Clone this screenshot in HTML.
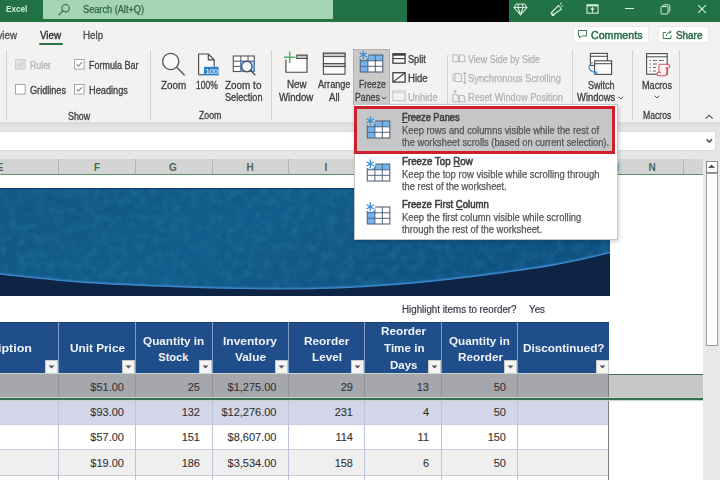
<!DOCTYPE html>
<html><head><meta charset="utf-8"><style>
html,body{margin:0;padding:0;width:720px;height:480px;overflow:hidden;background:#fff;font-family:'Liberation Sans', sans-serif;}
</style></head><body>
<div style="position:relative;width:720px;height:480px;overflow:hidden">
<div style="position:absolute;left:0px;top:0px;width:720px;height:22.5px;background:#217346;"></div>
<div style="position:absolute;left:43px;top:0px;width:290px;height:19px;background:#a5d4b5;"></div>
<svg style="position:absolute;left:0;top:0;pointer-events:none" width="720" height="480" viewBox="0 0 720 480"><circle cx="65.6" cy="8.2" r="3.7" fill="none" stroke="#2e6848" stroke-width="1.1"/><line x1="62.9" y1="10.9" x2="59" y2="14.8" stroke="#2e6848" stroke-width="1.2" stroke-linecap="round"/></svg>
<div style="position:absolute;left:82.50px;top:4.94px;font-size:10px;line-height:10px;font-weight:normal;color:#2c6446;white-space:pre;transform:scaleX(0.9184);transform-origin:0 0;-webkit-text-stroke:0.25px #2c6446">Search (Alt+Q)</div>
<div style="position:absolute;left:5.60px;top:4.27px;font-size:9.6px;line-height:9.6px;font-weight:bold;color:#d4ebdc;white-space:pre;transform:scaleX(0.8533);transform-origin:0 0;">Excel</div>
<div style="position:absolute;left:407px;top:0px;width:102px;height:23px;background:#000;"></div>
<svg style="position:absolute;left:513px;top:3px;overflow:visible;" width="15" height="13" viewBox="0 0 15 13"><path d="M3.5 1 H11.5 L14 4.5 L7.5 11.8 L1 4.5 Z M1 4.5 H14 M5.5 1 L5 4.5 L7.5 11.8 L10 4.5 L9.5 1" fill="none" stroke="#d8ece0" stroke-width="1.1" stroke-linejoin="round"/></svg>
<svg style="position:absolute;left:549px;top:2px;overflow:visible;" width="15" height="14" viewBox="0 0 15 14"><path d="M2 11 L9.5 3.5 L12.5 7 L4.5 12.5 Z M3 12 C2.5 13 3.5 14 5 13 L6 11.5 M11 2.5 L12.5 0.8 M12.5 4.5 L14 3.8" fill="none" stroke="#d8ece0" stroke-width="1.1" stroke-linejoin="round"/></svg>
<svg style="position:absolute;left:586px;top:4px;overflow:visible;" width="13" height="10" viewBox="0 0 13 10"><rect x="1" y="0.8" width="11" height="8.4" fill="none" stroke="#d8ece0" stroke-width="1.1"/><rect x="1" y="0.8" width="11" height="1.6" fill="#d8ece0"/><path d="M6.5 8.5 V4 M4.8 5.6 L6.5 3.8 L8.2 5.6" fill="none" stroke="#d8ece0" stroke-width="1.1"/></svg>
<div style="position:absolute;left:625px;top:7.8px;width:8.5px;height:1.1px;background:#d8ece0;"></div>
<svg style="position:absolute;left:659px;top:3px;overflow:visible;" width="12" height="12" viewBox="0 0 12 12"><rect x="2" y="3.5" width="7" height="7.5" rx="1" fill="none" stroke="#d8ece0" stroke-width="1"/><path d="M4 3.2 V2.6 C4 2 4.5 1.8 5 1.8 H9.5 C10.2 1.8 10.8 2.3 10.8 3 V7.8 C10.8 8.5 10.2 9 9.5 9" fill="none" stroke="#d8ece0" stroke-width="1"/></svg>
<svg style="position:absolute;left:697px;top:4px;overflow:visible;" width="10" height="10" viewBox="0 0 10 10"><path d="M1.2 1.2 L8.8 8.8 M8.8 1.2 L1.2 8.8" stroke="#d8ece0" stroke-width="1.1"/></svg>
<div style="position:absolute;left:0px;top:22px;width:720px;height:100px;background:#f3f2f1;"></div>
<div style="position:absolute;left:-14.90px;top:31.13px;font-size:10px;line-height:10px;font-weight:normal;color:#505050;white-space:pre;transform:scaleX(0.9757);transform-origin:0 0;-webkit-text-stroke:0.3px #505050">Review</div>
<div style="position:absolute;left:40.00px;top:31.13px;font-size:10px;line-height:10px;font-weight:normal;color:#303030;white-space:pre;transform:scaleX(0.9814);transform-origin:0 0;-webkit-text-stroke:0.35px #303030">View</div>
<div style="position:absolute;left:39px;top:42.5px;width:23.5px;height:2.3px;background:#2a7049;border-radius:1.2px"></div>
<div style="position:absolute;left:83.30px;top:31.13px;font-size:10px;line-height:10px;font-weight:normal;color:#505050;white-space:pre;transform:scaleX(0.9865);transform-origin:0 0;-webkit-text-stroke:0.3px #505050">Help</div>
<div style="position:absolute;left:6px;top:50px;width:1px;height:70px;background:#d4d2d0;"></div>
<div style="position:absolute;left:150px;top:50px;width:1px;height:70px;background:#d4d2d0;"></div>
<div style="position:absolute;left:271px;top:50px;width:1px;height:70px;background:#d4d2d0;"></div>
<div style="position:absolute;left:446.5px;top:55px;width:1px;height:50px;background:#d4d2d0;"></div>
<div style="position:absolute;left:571.5px;top:50px;width:1px;height:70px;background:#d4d2d0;"></div>
<div style="position:absolute;left:631.7px;top:50px;width:1px;height:70px;background:#d4d2d0;"></div>
<div style="position:absolute;left:679.3px;top:50px;width:1px;height:70px;background:#d4d2d0;"></div>
<div style="position:absolute;left:573px;top:26px;width:76px;height:17px;background:#ffffff;box-sizing:border-box;border:1px solid #ebe9e7;border-radius:2px"></div>
<svg style="position:absolute;left:0;top:0;pointer-events:none" width="720" height="480" viewBox="0 0 720 480"><path d="M578.5 30.5 H586.5 V36 H581.5 L579.5 38 V36 H578.5 Z" fill="none" stroke="#3a7a55" stroke-width="1" stroke-linejoin="round"/></svg>
<div style="position:absolute;left:590.70px;top:29.91px;font-size:10.5px;line-height:10.5px;font-weight:normal;color:#2a6e48;white-space:pre;transform:scaleX(1.0145);transform-origin:0 0;-webkit-text-stroke:0.5px #2a6e48">Comments</div>
<div style="position:absolute;left:658px;top:26px;width:51px;height:17px;background:#ffffff;box-sizing:border-box;border:1px solid #ebe9e7;border-radius:2px"></div>
<svg style="position:absolute;left:0;top:0;pointer-events:none" width="720" height="480" viewBox="0 0 720 480"><path d="M666 32.5 H663.2 V38.5 H671 V35.5 M666.5 36 C666.5 33.5 668 32 671 32 M669.5 30.3 L671.2 32 L669.5 33.7" fill="none" stroke="#3a7a55" stroke-width="1" stroke-linejoin="round"/></svg>
<div style="position:absolute;left:675.60px;top:29.91px;font-size:10.5px;line-height:10.5px;font-weight:normal;color:#2a6e48;white-space:pre;transform:scaleX(0.9418);transform-origin:0 0;-webkit-text-stroke:0.5px #2a6e48">Share</div>
<svg style="position:absolute;left:15.3px;top:58.9px;overflow:visible;" width="11" height="11" viewBox="0 0 11 11"><rect x="0.5" y="0.5" width="9.6" height="9.6" fill="#e4e2e0" stroke="#cfcdcb" stroke-width="1"/><path d="M2.6 5.4 L4.4 7.1 L8 3.3" fill="none" stroke="#c2c0be" stroke-width="1"/></svg>
<div style="position:absolute;left:30.00px;top:61.23px;font-size:10px;line-height:10px;font-weight:normal;color:#b3b1af;white-space:pre;transform:scaleX(0.8784);transform-origin:0 0;-webkit-text-stroke:0.25px #b3b1af">Ruler</div>
<svg style="position:absolute;left:15.3px;top:84.0px;overflow:visible;" width="11" height="11" viewBox="0 0 11 11"><rect x="0.5" y="0.5" width="9.6" height="9.6" fill="#ffffff" stroke="#a9a7a5" stroke-width="1"/></svg>
<div style="position:absolute;left:30.20px;top:85.83px;font-size:10px;line-height:10px;font-weight:normal;color:#404040;white-space:pre;transform:scaleX(0.9121);transform-origin:0 0;-webkit-text-stroke:0.3px #404040">Gridlines</div>
<svg style="position:absolute;left:74.2px;top:59.0px;overflow:visible;" width="11" height="11" viewBox="0 0 11 11"><rect x="0.5" y="0.5" width="9.6" height="9.6" fill="#ffffff" stroke="#a9a7a5" stroke-width="1"/><path d="M2.6 5.4 L4.4 7.1 L8 3.3" fill="none" stroke="#444" stroke-width="1"/></svg>
<div style="position:absolute;left:88.90px;top:61.03px;font-size:10px;line-height:10px;font-weight:normal;color:#404040;white-space:pre;transform:scaleX(0.8979);transform-origin:0 0;-webkit-text-stroke:0.3px #404040">Formula Bar</div>
<svg style="position:absolute;left:74.2px;top:84.0px;overflow:visible;" width="11" height="11" viewBox="0 0 11 11"><rect x="0.5" y="0.5" width="9.6" height="9.6" fill="#ffffff" stroke="#a9a7a5" stroke-width="1"/><path d="M2.6 5.4 L4.4 7.1 L8 3.3" fill="none" stroke="#444" stroke-width="1"/></svg>
<div style="position:absolute;left:88.90px;top:86.03px;font-size:10px;line-height:10px;font-weight:normal;color:#404040;white-space:pre;transform:scaleX(0.9204);transform-origin:0 0;-webkit-text-stroke:0.3px #404040">Headings</div>
<div style="position:absolute;left:67.80px;top:111.93px;font-size:10px;line-height:10px;font-weight:normal;color:#404040;white-space:pre;transform:scaleX(0.8874);transform-origin:0 0;-webkit-text-stroke:0.3px #404040">Show</div>
<svg style="position:absolute;left:0;top:0;pointer-events:none" width="720" height="480" viewBox="0 0 720 480"><circle cx="170.7" cy="61.4" r="8.1" fill="#fafafa" stroke="#505050" stroke-width="1.25"/><line x1="176.6" y1="67.3" x2="184.6" y2="75.2" stroke="#505050" stroke-width="1.4"/></svg>
<div style="position:absolute;left:160.70px;top:80.53px;font-size:10px;line-height:10px;font-weight:normal;color:#404040;white-space:pre;transform:scaleX(0.9897);transform-origin:0 0;-webkit-text-stroke:0.3px #404040">Zoom</div>
<svg style="position:absolute;left:0;top:0;pointer-events:none" width="720" height="480" viewBox="0 0 720 480"><path d="M198.6 74.8 V54 H208.3 L214.2 59.9 V66.8 M208.3 54 V59.9 H214.2" fill="#fafafa" stroke="#4a4a4a" stroke-width="1.15" stroke-linejoin="round"/><path d="M198.6 74.8 H204" stroke="#4a4a4a" stroke-width="1.15"/><rect x="204" y="66.8" width="14.6" height="8.6" fill="#2c80c8"/><text x="211.4" y="74.1" font-size="8" font-family="Liberation Sans" fill="#fff" text-anchor="middle" letter-spacing="-0.3">100</text></svg>
<div style="position:absolute;left:196.30px;top:80.53px;font-size:10px;line-height:10px;font-weight:normal;color:#404040;white-space:pre;transform:scaleX(0.8484);transform-origin:0 0;-webkit-text-stroke:0.3px #404040">100%</div>
<svg style="position:absolute;left:0;top:0;pointer-events:none" width="720" height="480" viewBox="0 0 720 480"><rect x="233.3" y="56" width="21" height="15.5" fill="#fff"/><rect x="240.8" y="61.2" width="13.5" height="10.3" fill="#b6d4f0"/><path d="M233.3 61.2 H254.3 M233.3 66.4 H240.8 M240.8 56 V71.5 M248 56 V61.2" stroke="#555" stroke-width="1"/><rect x="233.3" y="56" width="21" height="15.5" fill="none" stroke="#555" stroke-width="1.1"/><rect x="240.8" y="61.2" width="13.5" height="10.3" fill="none" stroke="#4a88c8" stroke-width="1"/><circle cx="246.8" cy="66.6" r="5.2" fill="#eef5fc" stroke="#4a4a4a" stroke-width="1.2"/><line x1="250.5" y1="70.3" x2="255.3" y2="75.2" stroke="#4a4a4a" stroke-width="1.3"/></svg>
<div style="position:absolute;left:225.40px;top:80.53px;font-size:10px;line-height:10px;font-weight:normal;color:#404040;white-space:pre;transform:scaleX(0.9922);transform-origin:0 0;-webkit-text-stroke:0.3px #404040">Zoom to</div>
<div style="position:absolute;left:224.90px;top:93.23px;font-size:10px;line-height:10px;font-weight:normal;color:#404040;white-space:pre;transform:scaleX(0.9115);transform-origin:0 0;-webkit-text-stroke:0.3px #404040">Selection</div>
<div style="position:absolute;left:198.60px;top:111.03px;font-size:10px;line-height:10px;font-weight:normal;color:#404040;white-space:pre;transform:scaleX(0.8763);transform-origin:0 0;-webkit-text-stroke:0.3px #404040">Zoom</div>
<svg style="position:absolute;left:0;top:0;pointer-events:none" width="720" height="480" viewBox="0 0 720 480"><path d="M285.9 59.5 V72.2 H307 V55.2 H296.8" fill="#fbfbfb" stroke="#4a4a4a" stroke-width="1.15"/><rect x="296.8" y="55.2" width="10.2" height="3.3" fill="#c8c8c8" stroke="#4a4a4a" stroke-width="1"/><path d="M289.7 51.5 V63 M284 57.2 H295.5" stroke="#54b06a" stroke-width="1.5"/></svg>
<div style="position:absolute;left:287.00px;top:80.33px;font-size:10px;line-height:10px;font-weight:normal;color:#404040;white-space:pre;transform:scaleX(0.9792);transform-origin:0 0;-webkit-text-stroke:0.3px #404040">New</div>
<div style="position:absolute;left:279.40px;top:93.23px;font-size:10px;line-height:10px;font-weight:normal;color:#404040;white-space:pre;transform:scaleX(0.9641);transform-origin:0 0;-webkit-text-stroke:0.3px #404040">Window</div>
<svg style="position:absolute;left:0;top:0;pointer-events:none" width="720" height="480" viewBox="0 0 720 480"><rect x="323.4" y="53.2" width="21.6" height="10.4" fill="#fbfbfb" stroke="#4a4a4a" stroke-width="1.1"/><rect x="323.4" y="53.2" width="21.6" height="3.4" fill="#c8c8c8" stroke="#4a4a4a" stroke-width="1"/><rect x="323.4" y="63.6" width="21.6" height="10.6" fill="#fbfbfb" stroke="#4a4a4a" stroke-width="1.1"/><rect x="323.4" y="63.6" width="21.6" height="3.0" fill="#c8c8c8" stroke="#4a4a4a" stroke-width="1"/></svg>
<div style="position:absolute;left:318.40px;top:80.33px;font-size:10px;line-height:10px;font-weight:normal;color:#404040;white-space:pre;transform:scaleX(0.9107);transform-origin:0 0;-webkit-text-stroke:0.3px #404040">Arrange</div>
<div style="position:absolute;left:329.00px;top:93.23px;font-size:10px;line-height:10px;font-weight:normal;color:#404040;white-space:pre;transform:scaleX(0.9618);transform-origin:0 0;-webkit-text-stroke:0.3px #404040">All</div>
<div style="position:absolute;left:353.2px;top:49px;width:36.6px;height:56px;background:#c9c9c9;box-sizing:border-box;border:1px solid #b2b2b2;border-bottom:none"></div>
<svg style="position:absolute;left:357.5px;top:47.2px;overflow:visible;" width="28" height="28" viewBox="0 0 28 28"><rect x="2.3" y="8" width="22.5" height="17" fill="#fff"/><rect x="2.3" y="8" width="22.5" height="5.8" fill="#74b4ee"/><rect x="2.3" y="8" width="7.6" height="17" fill="#74b4ee"/><path d="M2.3 13.8 H24.8 M2.3 19.3 H24.8 M9.899999999999999 8 V25 M17.3 8 V25" stroke="#52647c" stroke-width="1"/><rect x="2.3" y="8" width="22.5" height="17" fill="none" stroke="#52647c" stroke-width="1.1"/><circle cx="5.3" cy="7.9" r="5.1" fill="#c9c9c9"/><path d="M5.3 3.6000000000000005 V12.2 M1.5590000000000002 5.75 L9.041 10.05 M9.041 5.75 L1.5590000000000002 10.05" stroke="#3a8fd6" stroke-width="1.3"/></svg>
<div style="position:absolute;left:358.50px;top:80.33px;font-size:10px;line-height:10px;font-weight:normal;color:#404040;white-space:pre;transform:scaleX(0.8578);transform-origin:0 0;-webkit-text-stroke:0.3px #404040">Freeze</div>
<div style="position:absolute;left:355.00px;top:93.23px;font-size:10px;line-height:10px;font-weight:normal;color:#404040;white-space:pre;transform:scaleX(0.8745);transform-origin:0 0;-webkit-text-stroke:0.3px #404040">Panes</div>
<svg style="position:absolute;left:381px;top:96px;overflow:visible;" width="6" height="4" viewBox="0 0 6 4"><path d="M0.8 0.8 L3 3 L5.2 0.8" fill="none" stroke="#404040" stroke-width="0.9"/></svg>
<svg style="position:absolute;left:0;top:0;pointer-events:none" width="720" height="480" viewBox="0 0 720 480"><rect x="392.9" y="53.8" width="12.2" height="9.4" fill="#fafafa" stroke="#3a3a3a" stroke-width="1.25"/><rect x="392.9" y="53.8" width="12.2" height="1.9" fill="#3a3a3a"/><line x1="392.9" y1="58.6" x2="405.1" y2="58.6" stroke="#3a3a3a" stroke-width="1.1"/></svg>
<div style="position:absolute;left:408.00px;top:54.73px;font-size:10px;line-height:10px;font-weight:normal;color:#404040;white-space:pre;transform:scaleX(0.9150);transform-origin:0 0;-webkit-text-stroke:0.3px #404040">Split</div>
<svg style="position:absolute;left:0;top:0;pointer-events:none" width="720" height="480" viewBox="0 0 720 480"><rect x="392.9" y="72.7" width="12.2" height="9.4" fill="#fafafa" stroke="#3a3a3a" stroke-width="1.25"/><line x1="392.9" y1="82.1" x2="405.1" y2="72.7" stroke="#3a3a3a" stroke-width="1.1"/></svg>
<div style="position:absolute;left:408.00px;top:73.63px;font-size:10px;line-height:10px;font-weight:normal;color:#404040;white-space:pre;transform:scaleX(0.9573);transform-origin:0 0;-webkit-text-stroke:0.3px #404040">Hide</div>
<svg style="position:absolute;left:0;top:0;pointer-events:none" width="720" height="480" viewBox="0 0 720 480"><rect x="392.9" y="91" width="12.2" height="9.6" fill="none" stroke="#c9c7c5" stroke-width="1.2"/><line x1="392.9" y1="92.8" x2="405.1" y2="92.8" stroke="#d2d0ce" stroke-width="1"/></svg>
<div style="position:absolute;left:408.00px;top:92.73px;font-size:10px;line-height:10px;font-weight:normal;color:#b3b1af;white-space:pre;transform:scaleX(0.9337);transform-origin:0 0;-webkit-text-stroke:0.25px #b3b1af">Unhide</div>
<svg style="position:absolute;left:0;top:0;pointer-events:none" width="720" height="480" viewBox="0 0 720 480"><path d="M452.8 61.8 V54.8 H456.6 L458.2 56.4 V61.8 Z M459.4 61.8 V54.8 H463.2 L464.8 56.4 V61.8 Z" fill="none" stroke="#bdbbb9" stroke-width="1.1"/></svg>
<div style="position:absolute;left:467.50px;top:55.33px;font-size:10px;line-height:10px;font-weight:normal;color:#b3b1af;white-space:pre;transform:scaleX(0.8953);transform-origin:0 0;-webkit-text-stroke:0.25px #b3b1af">View Side by Side</div>
<svg style="position:absolute;left:0;top:0;pointer-events:none" width="720" height="480" viewBox="0 0 720 480"><path d="M453 73.5 V81.5 M455 73.5 H459.5 L461.5 75.5 V81.5 H455 Z M464.8 72.5 V83.5 M463.4 74 L464.8 72.5 L466.2 74 M463.4 82 L464.8 83.5 L466.2 82" fill="none" stroke="#bdbbb9" stroke-width="1.1"/></svg>
<div style="position:absolute;left:467.50px;top:73.58px;font-size:10px;line-height:10px;font-weight:normal;color:#b3b1af;white-space:pre;transform:scaleX(0.9347);transform-origin:0 0;-webkit-text-stroke:0.25px #b3b1af">Synchronous Scrolling</div>
<svg style="position:absolute;left:0;top:0;pointer-events:none" width="720" height="480" viewBox="0 0 720 480"><path d="M452.8 101.8 V94.5 H456.6 L458.2 96.1 V101.8 Z M459.4 101.8 V95.5 H463.2 L464.8 97.1 V101.8 Z M455 93.2 V90.5 M453.6 91.9 L455 90.5 L456.4 91.9" fill="none" stroke="#bdbbb9" stroke-width="1.1"/></svg>
<div style="position:absolute;left:467.50px;top:92.83px;font-size:10px;line-height:10px;font-weight:normal;color:#b3b1af;white-space:pre;transform:scaleX(0.9239);transform-origin:0 0;-webkit-text-stroke:0.25px #b3b1af">Reset Window Position</div>
<svg style="position:absolute;left:0;top:0;pointer-events:none" width="720" height="480" viewBox="0 0 720 480"><rect x="590.4" y="53.4" width="17" height="12" fill="#fbfbfb" stroke="#4a4a4a" stroke-width="1.1"/><line x1="590.4" y1="56.3" x2="607.4" y2="56.3" stroke="#4a4a4a" stroke-width="1"/><rect x="594.6" y="60.8" width="17" height="13.6" fill="#fbfbfb" stroke="#4a4a4a" stroke-width="1.1"/><line x1="594.6" y1="63.7" x2="611.6" y2="63.7" stroke="#4a4a4a" stroke-width="1"/><path d="M592.8 62.5 C587 65.5 588 71.5 596.5 72.8 M594.5 70.6 L596.8 72.8 L594.3 74.8" fill="none" stroke="#4a98d8" stroke-width="1.2"/></svg>
<div style="position:absolute;left:587.80px;top:80.53px;font-size:10px;line-height:10px;font-weight:normal;color:#404040;white-space:pre;transform:scaleX(0.9031);transform-origin:0 0;-webkit-text-stroke:0.3px #404040">Switch</div>
<div style="position:absolute;left:577.30px;top:93.43px;font-size:10px;line-height:10px;font-weight:normal;color:#404040;white-space:pre;transform:scaleX(0.9414);transform-origin:0 0;-webkit-text-stroke:0.3px #404040">Windows</div>
<svg style="position:absolute;left:618px;top:96px;overflow:visible;" width="6" height="4" viewBox="0 0 6 4"><path d="M0.8 0.8 L3 3 L5.2 0.8" fill="none" stroke="#404040" stroke-width="0.9"/></svg>
<svg style="position:absolute;left:0;top:0;pointer-events:none" width="720" height="480" viewBox="0 0 720 480"><rect x="646.6" y="53.6" width="20.6" height="20.6" fill="#fbfbfb" stroke="#4a4a4a" stroke-width="1.1"/><line x1="646.6" y1="56.8" x2="667.2" y2="56.8" stroke="#4a4a4a" stroke-width="1"/><path d="M649.5 60.5 H651 M653 60.5 H657 M659 60.5 H664 M649.5 64 H651 M653 64 H657 M649.5 67.5 H651 M653 67.5 H656 M649.5 71 H651 M653 71 H656" stroke="#6a6a6a" stroke-width="1"/><path d="M660.5 64.3 H667.3 C668.8 64.3 669.6 65.2 669.6 66.3 C669.6 67.4 668.8 68 667.6 68 H666.8 V73.6 C666.8 74.9 665.9 75.7 664.6 75.7 H659 C657.8 75.7 657 74.9 657 73.9 C657 72.8 657.8 72.2 658.9 72.2 V66 C658.9 65 659.6 64.3 660.5 64.3 Z M666.8 68 H665.2 M658.9 72.2 H661" fill="#fdf3f3" stroke="#d8505a" stroke-width="1.05" stroke-linejoin="round"/></svg>
<div style="position:absolute;left:641.80px;top:80.53px;font-size:10px;line-height:10px;font-weight:normal;color:#404040;white-space:pre;transform:scaleX(0.9147);transform-origin:0 0;-webkit-text-stroke:0.3px #404040">Macros</div>
<svg style="position:absolute;left:654px;top:95px;overflow:visible;" width="6" height="4" viewBox="0 0 6 4"><path d="M0.8 0.8 L3 3 L5.2 0.8" fill="none" stroke="#404040" stroke-width="0.9"/></svg>
<div style="position:absolute;left:642.70px;top:111.23px;font-size:10px;line-height:10px;font-weight:normal;color:#404040;white-space:pre;transform:scaleX(0.8629);transform-origin:0 0;-webkit-text-stroke:0.3px #404040">Macros</div>
<svg style="position:absolute;left:0;top:0;pointer-events:none" width="720" height="480" viewBox="0 0 720 480"><path d="M705.8 118.6 L709.2 115.2 L712.6 118.6" fill="none" stroke="#444" stroke-width="1.1"/></svg>
<div style="position:absolute;left:0px;top:122px;width:720px;height:37.5px;background:linear-gradient(#d9d8d7 0px,#e2e1e0 4px,#e6e6e6 9px,#e6e6e6 100%);"></div>
<div style="position:absolute;left:0px;top:131px;width:716px;height:20px;background:#ffffff;box-sizing:border-box;border:1px solid #dcdcdc;border-left:none"></div>
<svg style="position:absolute;left:0;top:0;pointer-events:none" width="720" height="480" viewBox="0 0 720 480"><path d="M706.6 139.2 L709.3 142.1 L712.0 139.2" fill="none" stroke="#505050" stroke-width="1.5"/></svg>
<div style="position:absolute;left:0px;top:159px;width:703px;height:15px;background:#d4d4d4;"></div>
<div style="position:absolute;left:0px;top:173.8px;width:703px;height:1.6px;background:#5a9270;"></div>
<div style="position:absolute;left:58.3px;top:159px;width:1px;height:15px;background:#b4b4b4;"></div>
<div style="position:absolute;left:135px;top:159px;width:1px;height:15px;background:#b4b4b4;"></div>
<div style="position:absolute;left:211.5px;top:159px;width:1px;height:15px;background:#b4b4b4;"></div>
<div style="position:absolute;left:288px;top:159px;width:1px;height:15px;background:#b4b4b4;"></div>
<div style="position:absolute;left:364px;top:159px;width:1px;height:15px;background:#b4b4b4;"></div>
<div style="position:absolute;left:441px;top:159px;width:1px;height:15px;background:#b4b4b4;"></div>
<div style="position:absolute;left:517.2px;top:159px;width:1px;height:15px;background:#b4b4b4;"></div>
<div style="position:absolute;left:609px;top:159px;width:1px;height:15px;background:#b4b4b4;"></div>
<div style="position:absolute;left:683px;top:159px;width:1px;height:15px;background:#b4b4b4;"></div>
<div style="position:absolute;left:-3.34px;top:162.74px;font-size:10px;line-height:10px;font-weight:bold;color:#4a6654;white-space:pre;">E</div>
<div style="position:absolute;left:93.95px;top:162.74px;font-size:10px;line-height:10px;font-weight:bold;color:#4a6654;white-space:pre;">F</div>
<div style="position:absolute;left:169.11px;top:162.74px;font-size:10px;line-height:10px;font-weight:bold;color:#4a6654;white-space:pre;">G</div>
<div style="position:absolute;left:246.38px;top:162.74px;font-size:10px;line-height:10px;font-weight:bold;color:#4a6654;white-space:pre;">H</div>
<div style="position:absolute;left:324.61px;top:162.74px;font-size:10px;line-height:10px;font-weight:bold;color:#4a6654;white-space:pre;">I</div>
<div style="position:absolute;left:400.22px;top:162.74px;font-size:10px;line-height:10px;font-weight:bold;color:#4a6654;white-space:pre;">J</div>
<div style="position:absolute;left:476.38px;top:162.74px;font-size:10px;line-height:10px;font-weight:bold;color:#4a6654;white-space:pre;">K</div>
<div style="position:absolute;left:560.95px;top:162.74px;font-size:10px;line-height:10px;font-weight:bold;color:#4a6654;white-space:pre;">L</div>
<div style="position:absolute;left:610.83px;top:162.74px;font-size:10px;line-height:10px;font-weight:bold;color:#4a6654;white-space:pre;">M</div>
<div style="position:absolute;left:648.38px;top:162.74px;font-size:10px;line-height:10px;font-weight:bold;color:#4a6654;white-space:pre;">N</div>
<div style="position:absolute;left:703px;top:159px;width:17px;height:321px;background:#e9e9e9;"></div>
<div style="position:absolute;left:705.5px;top:161px;width:12px;height:12px;background:#ffffff;box-sizing:border-box;border:1px solid #8a8a8a"></div>
<svg style="position:absolute;left:707px;top:163px;overflow:visible;" width="9" height="7" viewBox="0 0 9 7"><path d="M1 5 L4.5 1.5 L8 5 Z" fill="#555"/></svg>
<div style="position:absolute;left:705.5px;top:173px;width:12px;height:173px;background:#ffffff;box-sizing:border-box;border:1px solid #9a9a9a"></div>
<div style="position:absolute;left:0px;top:175.6px;width:703px;height:304.4px;background:#ffffff;"></div>
<svg style="position:absolute;left:0;top:188px" width="610.3" height="108" viewBox="0 0 610.3 108" preserveAspectRatio="none">
<defs>
<linearGradient id="bg1" x1="0" y1="0" x2="1" y2="0.3"><stop offset="0" stop-color="#115886"/><stop offset="0.45" stop-color="#125d8b"/><stop offset="1" stop-color="#0f5282"/></linearGradient>
<filter id="tex" x="0" y="0" width="100%" height="100%"><feTurbulence type="fractalNoise" baseFrequency="0.11" numOctaves="3" seed="7"/><feColorMatrix type="matrix" values="0 0 0 0 0.04  0 0 0 0 0.26  0 0 0 0 0.42  0 0 0 -1.6 0.95"/></filter>
<filter id="tex2" x="0" y="0" width="100%" height="100%"><feTurbulence type="fractalNoise" baseFrequency="0.12" numOctaves="3" seed="19"/><feColorMatrix type="matrix" values="0 0 0 0 0.15  0 0 0 0 0.45  0 0 0 0 0.68  0 0 0 2.0 -1.05"/></filter>
</defs>
<rect width="610.3" height="108" fill="url(#bg1)"/>
<rect width="610.3" height="108" filter="url(#tex)" opacity="0.35"/>
<rect width="610.3" height="108" filter="url(#tex2)" opacity="0.06"/>
<rect width="610.3" height="1.2" fill="#123f66"/>
<path d="M0 86 C13.3 87.3 53.3 92.0 80 94 C106.7 96.0 133.3 96.9 160 98 C186.7 99.1 213.3 100.0 240 100.4 C266.7 100.8 293.3 101.1 320 100.4 C346.7 99.7 374.0 98.1 400 96 C426.0 93.9 450.5 91.2 476 88 C501.5 84.8 530.8 80.8 553 77 C575.2 73.2 599.7 67.0 610.3 64.6 V108 H0 Z" fill="#0d2444"/>
<path d="M 0.0 85.2 C 13.3 86.5 53.3 91.2 80.0 93.2 C 106.7 95.2 133.3 96.1 160.0 97.2 C 186.7 98.3 213.3 99.2 240.0 99.6 C 266.7 100.0 293.3 100.3 320.0 99.6 C 346.7 98.9 374.0 97.3 400.0 95.2 C 426.0 93.1 450.5 90.4 476.0 87.2 C 501.5 84.0 530.8 80.0 553.0 76.2 C 575.2 72.4 599.7 66.2 609.0 64.2" fill="none" stroke="#2f78ba" stroke-width="2" opacity="0.5"/>
<path d="M0 86 C13.3 87.3 53.3 92.0 80 94 C106.7 96.0 133.3 96.9 160 98 C186.7 99.1 213.3 100.0 240 100.4 C266.7 100.8 293.3 101.1 320 100.4 C346.7 99.7 374.0 98.1 400 96 C426.0 93.9 450.5 91.2 476 88 C501.5 84.8 530.8 80.8 553 77 C575.2 73.2 599.7 67.0 610.3 64.6" fill="none" stroke="#3a86c8" stroke-width="1.3"/>
</svg>
<div style="position:absolute;left:401.50px;top:305.14px;font-size:10px;line-height:10px;font-weight:normal;color:#383848;white-space:pre;transform:scaleX(0.9763);transform-origin:0 0;-webkit-text-stroke:0.2px #383848">Highlight items to reorder?</div>
<div style="position:absolute;left:529.00px;top:305.14px;font-size:10px;line-height:10px;font-weight:normal;color:#383848;white-space:pre;transform:scaleX(0.9799);transform-origin:0 0;-webkit-text-stroke:0.2px #383848">Yes</div>
<div style="position:absolute;left:0px;top:322px;width:609px;height:51.5px;background:#204e8a;"></div>
<div style="position:absolute;left:0px;top:322px;width:609px;height:1px;background:#173d6e;"></div>
<div style="position:absolute;left:58.3px;top:322px;width:1px;height:51.5px;background:#7e9cc6;"></div>
<div style="position:absolute;left:135px;top:322px;width:1px;height:51.5px;background:#7e9cc6;"></div>
<div style="position:absolute;left:211.5px;top:322px;width:1px;height:51.5px;background:#7e9cc6;"></div>
<div style="position:absolute;left:288px;top:322px;width:1px;height:51.5px;background:#7e9cc6;"></div>
<div style="position:absolute;left:364px;top:322px;width:1px;height:51.5px;background:#7e9cc6;"></div>
<div style="position:absolute;left:441px;top:322px;width:1px;height:51.5px;background:#7e9cc6;"></div>
<div style="position:absolute;left:517.2px;top:322px;width:1px;height:51.5px;background:#7e9cc6;"></div>
<div style="position:absolute;left:45.3px;top:360px;width:13px;height:13.5px;background:#f4f4f4;box-sizing:border-box;border:1px solid #c8c8c8"></div>
<svg style="position:absolute;left:48.3px;top:364.8px;overflow:visible;" width="7" height="4" viewBox="0 0 7 4"><path d="M0.5 0.5 H6.5 L3.5 3.5 Z" fill="#555"/></svg>
<div style="position:absolute;left:122px;top:360px;width:13px;height:13.5px;background:#f4f4f4;box-sizing:border-box;border:1px solid #c8c8c8"></div>
<svg style="position:absolute;left:125px;top:364.8px;overflow:visible;" width="7" height="4" viewBox="0 0 7 4"><path d="M0.5 0.5 H6.5 L3.5 3.5 Z" fill="#555"/></svg>
<div style="position:absolute;left:198.5px;top:360px;width:13px;height:13.5px;background:#f4f4f4;box-sizing:border-box;border:1px solid #c8c8c8"></div>
<svg style="position:absolute;left:201.5px;top:364.8px;overflow:visible;" width="7" height="4" viewBox="0 0 7 4"><path d="M0.5 0.5 H6.5 L3.5 3.5 Z" fill="#555"/></svg>
<div style="position:absolute;left:275px;top:360px;width:13px;height:13.5px;background:#f4f4f4;box-sizing:border-box;border:1px solid #c8c8c8"></div>
<svg style="position:absolute;left:278px;top:364.8px;overflow:visible;" width="7" height="4" viewBox="0 0 7 4"><path d="M0.5 0.5 H6.5 L3.5 3.5 Z" fill="#555"/></svg>
<div style="position:absolute;left:351px;top:360px;width:13px;height:13.5px;background:#f4f4f4;box-sizing:border-box;border:1px solid #c8c8c8"></div>
<svg style="position:absolute;left:354px;top:364.8px;overflow:visible;" width="7" height="4" viewBox="0 0 7 4"><path d="M0.5 0.5 H6.5 L3.5 3.5 Z" fill="#555"/></svg>
<div style="position:absolute;left:428px;top:360px;width:13px;height:13.5px;background:#f4f4f4;box-sizing:border-box;border:1px solid #c8c8c8"></div>
<svg style="position:absolute;left:431px;top:364.8px;overflow:visible;" width="7" height="4" viewBox="0 0 7 4"><path d="M0.5 0.5 H6.5 L3.5 3.5 Z" fill="#555"/></svg>
<div style="position:absolute;left:504.20000000000005px;top:360px;width:13px;height:13.5px;background:#f4f4f4;box-sizing:border-box;border:1px solid #c8c8c8"></div>
<svg style="position:absolute;left:507.20000000000005px;top:364.8px;overflow:visible;" width="7" height="4" viewBox="0 0 7 4"><path d="M0.5 0.5 H6.5 L3.5 3.5 Z" fill="#555"/></svg>
<div style="position:absolute;left:596px;top:360px;width:13px;height:13.5px;background:#f4f4f4;box-sizing:border-box;border:1px solid #c8c8c8"></div>
<svg style="position:absolute;left:599px;top:364.8px;overflow:visible;" width="7" height="4" viewBox="0 0 7 4"><path d="M0.5 0.5 H6.5 L3.5 3.5 Z" fill="#555"/></svg>
<div style="position:absolute;left:-2.40px;top:343.29px;font-size:11px;line-height:11px;font-weight:bold;color:#f0f4fa;white-space:pre;transform:scaleX(1.1357);transform-origin:0 0;">iption</div>
<div style="position:absolute;left:70.00px;top:342.99px;font-size:11px;line-height:11px;font-weight:bold;color:#f0f4fa;white-space:pre;transform:scaleX(1.0709);transform-origin:0 0;">Unit Price</div>
<div style="position:absolute;left:142.65px;top:335.99px;font-size:11px;line-height:11px;font-weight:bold;color:#f0f4fa;white-space:pre;transform:scaleX(1.0670);transform-origin:0 0;">Quantity in</div>
<div style="position:absolute;left:158.32px;top:351.99px;font-size:11px;line-height:11px;font-weight:bold;color:#f0f4fa;white-space:pre;">Stock</div>
<div style="position:absolute;left:223.30px;top:335.99px;font-size:11px;line-height:11px;font-weight:bold;color:#f0f4fa;white-space:pre;transform:scaleX(1.0906);transform-origin:0 0;">Inventory</div>
<div style="position:absolute;left:235.00px;top:351.99px;font-size:11px;line-height:11px;font-weight:bold;color:#f0f4fa;white-space:pre;transform:scaleX(1.0783);transform-origin:0 0;">Value</div>
<div style="position:absolute;left:304.05px;top:335.99px;font-size:11px;line-height:11px;font-weight:bold;color:#f0f4fa;white-space:pre;transform:scaleX(1.0738);transform-origin:0 0;">Reorder</div>
<div style="position:absolute;left:311.70px;top:351.99px;font-size:11px;line-height:11px;font-weight:bold;color:#f0f4fa;white-space:pre;transform:scaleX(1.0661);transform-origin:0 0;">Level</div>
<div style="position:absolute;left:381.00px;top:326.29px;font-size:11px;line-height:11px;font-weight:bold;color:#f0f4fa;white-space:pre;transform:scaleX(1.0667);transform-origin:0 0;">Reorder</div>
<div style="position:absolute;left:383.55px;top:343.29px;font-size:11px;line-height:11px;font-weight:bold;color:#f0f4fa;white-space:pre;transform:scaleX(1.0571);transform-origin:0 0;">Time in</div>
<div style="position:absolute;left:390.05px;top:360.29px;font-size:11px;line-height:11px;font-weight:bold;color:#f0f4fa;white-space:pre;transform:scaleX(1.0458);transform-origin:0 0;">Days</div>
<div style="position:absolute;left:449.00px;top:335.79px;font-size:11px;line-height:11px;font-weight:bold;color:#f0f4fa;white-space:pre;transform:scaleX(1.0617);transform-origin:0 0;">Quantity in</div>
<div style="position:absolute;left:457.50px;top:352.29px;font-size:11px;line-height:11px;font-weight:bold;color:#f0f4fa;white-space:pre;transform:scaleX(1.0667);transform-origin:0 0;">Reorder</div>
<div style="position:absolute;left:522.55px;top:343.29px;font-size:11px;line-height:11px;font-weight:bold;color:#f0f4fa;white-space:pre;transform:scaleX(1.0669);transform-origin:0 0;">Discontinued?</div>
<div style="position:absolute;left:0px;top:373.5px;width:609px;height:24.69999999999999px;background:#a6a7ad;"></div>
<div style="position:absolute;left:0px;top:399.8px;width:609px;height:24.69999999999999px;background:#d3d6e8;"></div>
<div style="position:absolute;left:0px;top:424.5px;width:609px;height:25.0px;background:#ffffff;"></div>
<div style="position:absolute;left:0px;top:449.5px;width:609px;height:25.5px;background:#efefef;"></div>
<div style="position:absolute;left:0px;top:475px;width:609px;height:6px;background:#ffffff;"></div>
<div style="position:absolute;left:609px;top:373.5px;width:94px;height:24.7px;background:#c8c8c8;"></div>
<div style="position:absolute;left:0px;top:424.0px;width:609px;height:1px;background:#c9cde0;"></div>
<div style="position:absolute;left:0px;top:449.0px;width:609px;height:1px;background:#c9cde0;"></div>
<div style="position:absolute;left:0px;top:474.5px;width:609px;height:1px;background:#c9cde0;"></div>
<div style="position:absolute;left:58.3px;top:399.5px;width:1px;height:81px;background:#bcc3da;"></div>
<div style="position:absolute;left:58.3px;top:373.5px;width:1px;height:25px;background:#8f9098;"></div>
<div style="position:absolute;left:135px;top:399.5px;width:1px;height:81px;background:#bcc3da;"></div>
<div style="position:absolute;left:135px;top:373.5px;width:1px;height:25px;background:#8f9098;"></div>
<div style="position:absolute;left:211.5px;top:399.5px;width:1px;height:81px;background:#bcc3da;"></div>
<div style="position:absolute;left:211.5px;top:373.5px;width:1px;height:25px;background:#8f9098;"></div>
<div style="position:absolute;left:288px;top:399.5px;width:1px;height:81px;background:#bcc3da;"></div>
<div style="position:absolute;left:288px;top:373.5px;width:1px;height:25px;background:#8f9098;"></div>
<div style="position:absolute;left:364px;top:399.5px;width:1px;height:81px;background:#bcc3da;"></div>
<div style="position:absolute;left:364px;top:373.5px;width:1px;height:25px;background:#8f9098;"></div>
<div style="position:absolute;left:441px;top:399.5px;width:1px;height:81px;background:#bcc3da;"></div>
<div style="position:absolute;left:441px;top:373.5px;width:1px;height:25px;background:#8f9098;"></div>
<div style="position:absolute;left:517.2px;top:399.5px;width:1px;height:81px;background:#bcc3da;"></div>
<div style="position:absolute;left:517.2px;top:373.5px;width:1px;height:25px;background:#8f9098;"></div>
<div style="position:absolute;left:608.2px;top:373.5px;width:1px;height:107px;background:#7a7c88;"></div>
<div style="position:absolute;left:0px;top:373.4px;width:609px;height:1px;background:#c4d6ca;"></div>
<div style="position:absolute;left:0px;top:397.4px;width:703px;height:0.9px;background:#c4d6ca;"></div>
<div style="position:absolute;left:0px;top:398.3px;width:703px;height:1.7px;background:#357050;"></div>
<div style="position:absolute;left:0px;top:400.0px;width:703px;height:0.8px;background:#c4d6ca;"></div>
<div style="position:absolute;left:609px;top:373.5px;width:94px;height:1.6px;background:#357050;"></div>
<div style="position:absolute;left:90.34px;top:382.09px;font-size:11px;line-height:11px;font-weight:normal;color:#333333;white-space:pre;-webkit-text-stroke:0.1px #333">$51.00</div>
<div style="position:absolute;left:187.75px;top:382.09px;font-size:11px;line-height:11px;font-weight:normal;color:#333333;white-space:pre;-webkit-text-stroke:0.1px #333">25</div>
<div style="position:absolute;left:227.56px;top:382.09px;font-size:11px;line-height:11px;font-weight:normal;color:#333333;white-space:pre;-webkit-text-stroke:0.1px #333">$1,275.00</div>
<div style="position:absolute;left:340.75px;top:382.09px;font-size:11px;line-height:11px;font-weight:normal;color:#333333;white-space:pre;-webkit-text-stroke:0.1px #333">29</div>
<div style="position:absolute;left:416.75px;top:382.09px;font-size:11px;line-height:11px;font-weight:normal;color:#333333;white-space:pre;-webkit-text-stroke:0.1px #333">13</div>
<div style="position:absolute;left:493.75px;top:382.09px;font-size:11px;line-height:11px;font-weight:normal;color:#333333;white-space:pre;-webkit-text-stroke:0.1px #333">50</div>
<div style="position:absolute;left:90.34px;top:407.29px;font-size:11px;line-height:11px;font-weight:normal;color:#333333;white-space:pre;-webkit-text-stroke:0.1px #333">$93.00</div>
<div style="position:absolute;left:181.64px;top:407.29px;font-size:11px;line-height:11px;font-weight:normal;color:#333333;white-space:pre;-webkit-text-stroke:0.1px #333">132</div>
<div style="position:absolute;left:221.44px;top:407.29px;font-size:11px;line-height:11px;font-weight:normal;color:#333333;white-space:pre;-webkit-text-stroke:0.1px #333">$12,276.00</div>
<div style="position:absolute;left:334.64px;top:407.29px;font-size:11px;line-height:11px;font-weight:normal;color:#333333;white-space:pre;-webkit-text-stroke:0.1px #333">231</div>
<div style="position:absolute;left:422.88px;top:407.29px;font-size:11px;line-height:11px;font-weight:normal;color:#333333;white-space:pre;-webkit-text-stroke:0.1px #333">4</div>
<div style="position:absolute;left:493.75px;top:407.29px;font-size:11px;line-height:11px;font-weight:normal;color:#333333;white-space:pre;-webkit-text-stroke:0.1px #333">50</div>
<div style="position:absolute;left:90.34px;top:432.49px;font-size:11px;line-height:11px;font-weight:normal;color:#333333;white-space:pre;-webkit-text-stroke:0.1px #333">$57.00</div>
<div style="position:absolute;left:181.64px;top:432.49px;font-size:11px;line-height:11px;font-weight:normal;color:#333333;white-space:pre;-webkit-text-stroke:0.1px #333">151</div>
<div style="position:absolute;left:227.56px;top:432.49px;font-size:11px;line-height:11px;font-weight:normal;color:#333333;white-space:pre;-webkit-text-stroke:0.1px #333">$8,607.00</div>
<div style="position:absolute;left:335.45px;top:432.49px;font-size:11px;line-height:11px;font-weight:normal;color:#333333;white-space:pre;-webkit-text-stroke:0.1px #333">114</div>
<div style="position:absolute;left:417.58px;top:432.49px;font-size:11px;line-height:11px;font-weight:normal;color:#333333;white-space:pre;-webkit-text-stroke:0.1px #333">11</div>
<div style="position:absolute;left:487.64px;top:432.49px;font-size:11px;line-height:11px;font-weight:normal;color:#333333;white-space:pre;-webkit-text-stroke:0.1px #333">150</div>
<div style="position:absolute;left:90.34px;top:457.69px;font-size:11px;line-height:11px;font-weight:normal;color:#333333;white-space:pre;-webkit-text-stroke:0.1px #333">$19.00</div>
<div style="position:absolute;left:181.64px;top:457.69px;font-size:11px;line-height:11px;font-weight:normal;color:#333333;white-space:pre;-webkit-text-stroke:0.1px #333">186</div>
<div style="position:absolute;left:227.56px;top:457.69px;font-size:11px;line-height:11px;font-weight:normal;color:#333333;white-space:pre;-webkit-text-stroke:0.1px #333">$3,534.00</div>
<div style="position:absolute;left:334.64px;top:457.69px;font-size:11px;line-height:11px;font-weight:normal;color:#333333;white-space:pre;-webkit-text-stroke:0.1px #333">158</div>
<div style="position:absolute;left:422.88px;top:457.69px;font-size:11px;line-height:11px;font-weight:normal;color:#333333;white-space:pre;-webkit-text-stroke:0.1px #333">6</div>
<div style="position:absolute;left:493.75px;top:457.69px;font-size:11px;line-height:11px;font-weight:normal;color:#333333;white-space:pre;-webkit-text-stroke:0.1px #333">50</div>
<div style="position:absolute;left:353.5px;top:104px;width:264.3px;height:135.8px;background:#ffffff;box-sizing:border-box;border:1px solid #c6c6c6;box-shadow:1px 2px 4px rgba(0,0,0,0.18)"></div>
<div style="position:absolute;left:353.8px;top:105.5px;width:261px;height:48.5px;background:#c6c6c6;box-sizing:border-box;border:3px solid #d01f2b"></div>
<svg style="position:absolute;left:365px;top:113px;overflow:visible;" width="28" height="28" viewBox="0 0 28 28"><rect x="2.3" y="8" width="22.5" height="17" fill="#fff"/><rect x="2.3" y="8" width="22.5" height="5.8" fill="#74b4ee"/><rect x="2.3" y="8" width="7.6" height="17" fill="#74b4ee"/><path d="M2.3 13.8 H24.8 M2.3 19.3 H24.8 M9.899999999999999 8 V25 M17.3 8 V25" stroke="#52647c" stroke-width="1"/><rect x="2.3" y="8" width="22.5" height="17" fill="none" stroke="#52647c" stroke-width="1.1"/><circle cx="5.3" cy="7.9" r="5.1" fill="#c6c6c6"/><path d="M5.3 3.6000000000000005 V12.2 M1.5590000000000002 5.75 L9.041 10.05 M9.041 5.75 L1.5590000000000002 10.05" stroke="#3a8fd6" stroke-width="1.3"/></svg>
<svg style="position:absolute;left:365px;top:156px;overflow:visible;" width="28" height="28" viewBox="0 0 28 28"><rect x="2.3" y="8" width="22.5" height="17" fill="#fff"/><rect x="2.3" y="8" width="22.5" height="5.8" fill="#74b4ee"/><path d="M2.3 13.8 H24.8 M2.3 19.3 H24.8 M9.899999999999999 8 V25 M17.3 8 V25" stroke="#52647c" stroke-width="1"/><rect x="2.3" y="8" width="22.5" height="17" fill="none" stroke="#52647c" stroke-width="1.1"/><circle cx="5.3" cy="7.9" r="5.1" fill="#ffffff"/><path d="M5.3 3.6000000000000005 V12.2 M1.5590000000000002 5.75 L9.041 10.05 M9.041 5.75 L1.5590000000000002 10.05" stroke="#3a8fd6" stroke-width="1.3"/></svg>
<svg style="position:absolute;left:365px;top:199px;overflow:visible;" width="28" height="28" viewBox="0 0 28 28"><rect x="2.3" y="8" width="22.5" height="17" fill="#fff"/><rect x="2.3" y="8" width="7.6" height="17" fill="#74b4ee"/><path d="M2.3 13.8 H24.8 M2.3 19.3 H24.8 M9.899999999999999 8 V25 M17.3 8 V25" stroke="#52647c" stroke-width="1"/><rect x="2.3" y="8" width="22.5" height="17" fill="none" stroke="#52647c" stroke-width="1.1"/><circle cx="5.3" cy="7.9" r="5.1" fill="#ffffff"/><path d="M5.3 3.6000000000000005 V12.2 M1.5590000000000002 5.75 L9.041 10.05 M9.041 5.75 L1.5590000000000002 10.05" stroke="#3a8fd6" stroke-width="1.3"/></svg>
<div style="position:absolute;left:402.20px;top:113.33px;font-size:10px;line-height:10px;font-weight:normal;color:#404040;white-space:pre;transform:scaleX(0.9251);transform-origin:0 0;-webkit-text-stroke:0.55px #404040"><u>F</u>reeze Panes</div>
<div style="position:absolute;left:402.20px;top:126.34px;font-size:10px;line-height:10px;font-weight:normal;color:#555555;white-space:pre;transform:scaleX(0.9376);transform-origin:0 0;-webkit-text-stroke:0.25px #555555">Keep rows and columns visible while the rest of</div>
<div style="position:absolute;left:402.20px;top:137.64px;font-size:10px;line-height:10px;font-weight:normal;color:#555555;white-space:pre;transform:scaleX(0.9287);transform-origin:0 0;-webkit-text-stroke:0.25px #555555">the worksheet scrolls (based on current selection).</div>
<div style="position:absolute;left:402.20px;top:156.94px;font-size:10px;line-height:10px;font-weight:normal;color:#404040;white-space:pre;transform:scaleX(0.9745);transform-origin:0 0;-webkit-text-stroke:0.55px #404040">Freeze Top <u>R</u>ow</div>
<div style="position:absolute;left:402.20px;top:170.44px;font-size:10px;line-height:10px;font-weight:normal;color:#555555;white-space:pre;transform:scaleX(0.9505);transform-origin:0 0;-webkit-text-stroke:0.25px #555555">Keep the top row visible while scrolling through</div>
<div style="position:absolute;left:402.20px;top:181.94px;font-size:10px;line-height:10px;font-weight:normal;color:#555555;white-space:pre;transform:scaleX(0.9325);transform-origin:0 0;-webkit-text-stroke:0.25px #555555">the rest of the worksheet.</div>
<div style="position:absolute;left:402.20px;top:200.24px;font-size:10px;line-height:10px;font-weight:normal;color:#404040;white-space:pre;transform:scaleX(0.9580);transform-origin:0 0;-webkit-text-stroke:0.55px #404040">Freeze First <u>C</u>olumn</div>
<div style="position:absolute;left:402.20px;top:213.14px;font-size:10px;line-height:10px;font-weight:normal;color:#555555;white-space:pre;transform:scaleX(0.9460);transform-origin:0 0;-webkit-text-stroke:0.25px #555555">Keep the first column visible while scrolling</div>
<div style="position:absolute;left:402.20px;top:224.64px;font-size:10px;line-height:10px;font-weight:normal;color:#555555;white-space:pre;transform:scaleX(0.9404);transform-origin:0 0;-webkit-text-stroke:0.25px #555555">through the rest of the worksheet.</div>
</div></body></html>
